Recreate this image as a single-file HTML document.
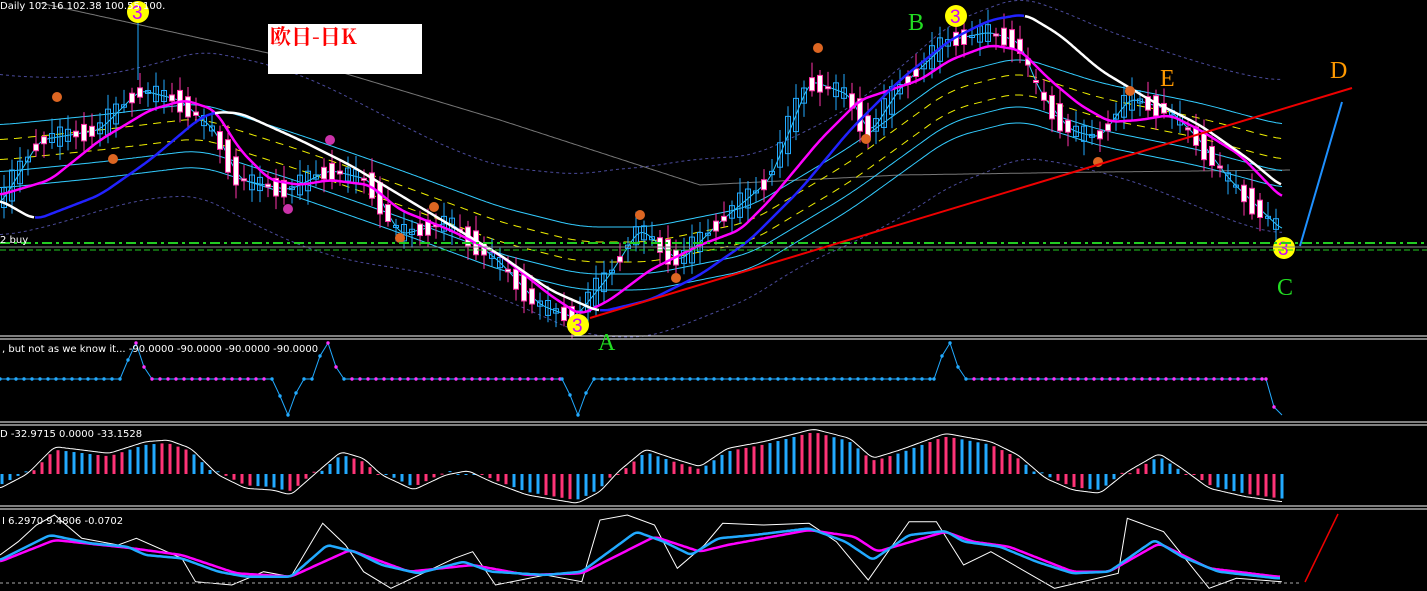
<!DOCTYPE html><html><head><meta charset="utf-8"><style>
body{margin:0;background:#000;width:1427px;height:591px;overflow:hidden;font-family:"Liberation Sans","Noto Sans CJK SC",sans-serif}
svg{position:absolute;left:0;top:0}
.t{fill:#fff;font-size:10px;font-family:"DejaVu Sans",sans-serif}
</style></head><body>
<svg id="s" width="1427" height="591" xmlns="http://www.w3.org/2000/svg">
<rect width="1427" height="591" fill="#000"/>
<g id="g"></g>
<line x1="0" y1="336" x2="1427" y2="336" stroke="#fff"/><line x1="0" y1="339" x2="1427" y2="339" stroke="#fff"/>
<line x1="0" y1="422" x2="1427" y2="422" stroke="#fff"/><line x1="0" y1="425" x2="1427" y2="425" stroke="#fff"/>
<line x1="0" y1="506" x2="1427" y2="506" stroke="#fff"/><line x1="0" y1="509" x2="1427" y2="509" stroke="#fff"/>
<line x1="0" y1="243" x2="1427" y2="243" stroke="#2c2" stroke-width="2" stroke-dasharray="10,4,3,4"/>
<line x1="0" y1="247" x2="1427" y2="247" stroke="#888"/>
<line x1="0" y1="250" x2="1427" y2="250" stroke="#2c2" stroke-dasharray="6,3"/>
<line x1="0" y1="583" x2="1300" y2="583" stroke="#aaa" stroke-dasharray="3,3"/>
<line x1="590" y1="318" x2="1352" y2="88" stroke="#e00" stroke-width="2"/>
<line x1="1300" y1="246" x2="1342" y2="102" stroke="#1e90ff" stroke-width="2"/>
<line x1="1305" y1="582" x2="1338" y2="514" stroke="#e00" stroke-width="1.5"/>
<rect x="268" y="24" width="154" height="50" fill="#fff"/>
<text x="270" y="44" fill="#f00" font-size="21" font-family="'Noto Serif CJK SC',serif" font-weight="bold">欧日-日K</text>
<text class="t" x="0" y="9">Daily  102.16 102.38 100.55 100.</text>
<text class="t" x="0" y="243">2 buy</text>
<text class="t" x="2" y="352">, but not as we know it...  -90.0000 -90.0000 -90.0000 -90.0000</text>
<text class="t" x="0" y="437">D -32.9715 0.0000 -33.1528</text>
<text class="t" x="2" y="524">I 6.2970 9.4806 -0.0702</text>
<g font-family="'Liberation Serif',serif" font-size="24">
<text x="598" y="350" fill="#2d2">A</text><text x="908" y="30" fill="#2d2">B</text>
<text x="1277" y="295" fill="#2d2">C</text><text x="1330" y="78" fill="#f90">D</text>
<text x="1160" y="86" fill="#f90">E</text></g>
</svg>
<script>
var g=document.getElementById('g'),N='http://www.w3.org/2000/svg';
function el(t,a,p){var e=document.createElementNS(N,t);for(var k in a)e.setAttribute(k,a[k]);(p||g).appendChild(e);return e}
function mk(K){return function(x){if(x<=K[0][0])return K[0][1];for(var i=0;i<K.length-1;i++)if(x<=K[i+1][0]){var t=(x-K[i][0])/(K[i+1][0]-K[i][0]);return K[i][1]+t*(K[i+1][1]-K[i][1])}return K[K.length-1][1]}}
function sm(f,w){return function(x){var s=0,n=0;for(var d=-w;d<=w;d+=2){s+=f(x+d);n++}return s/n}}
function line(f,c,w,x0,x1,da){var d='';for(var x=x0;x<=x1;x+=2)d+=(x==x0?'M':'L')+x+','+f(x).toFixed(1);el('path',{d:d,stroke:c,'stroke-width':w,fill:'none','stroke-dasharray':da||''})}
function poly(pts,c,w){var d='';pts.forEach(function(p,i){d+=(i?'L':'M')+p[0].toFixed(1)+','+p[1].toFixed(1)});el('path',{d:d,stroke:c,'stroke-width':w,fill:'none'})}
var P=sm(mk([[0,205],[40,140],[100,130],[140,90],[180,100],[215,130],[240,180],[290,190],[330,170],[370,180],[400,235],[450,222],[500,262],[540,305],[575,318],[610,275],[640,228],[680,262],[720,222],[770,180],[810,80],[850,95],[870,135],[900,88],[950,40],[990,32],[1020,42],[1040,92],[1070,130],[1100,138],[1130,98],[1170,110],[1200,140],[1230,180],[1282,230]]),4);
var C=sm(mk([[0,150],[100,140],[200,128],[300,160],[400,195],[500,232],[580,252],[650,252],[750,232],[850,172],[950,100],[1020,82],[1100,108],[1200,128],[1282,150]]),20);
var M=sm(mk([[0,195],[50,180],[100,140],[150,110],[185,100],[215,110],[240,150],[270,180],[300,185],[330,180],[370,185],[400,210],[450,230],[500,255],[550,295],[580,315],[610,300],[650,270],[700,245],[740,230],[770,200],[820,140],[860,100],[890,90],[920,80],[950,60],[990,45],[1020,50],[1050,80],[1080,105],[1110,122],[1140,120],[1170,115],[1200,130],[1240,155],[1282,198]]),8);
var S=sm(mk([[0,200],[35,220],[100,195],[150,160],[200,118],[215,112],[240,113],[300,140],[350,165],[400,195],[450,225],[500,255],[550,290],[600,312],[650,300],[700,275],[750,240],[800,190],[850,130],[900,80],[950,40],[990,20],[1025,14],[1060,35],[1100,70],[1150,100],[1200,125],[1250,160],[1282,187]]),10);
var Gr=mk([[40,3],[300,60],[500,120],[700,185],[900,175],[1100,172],[1290,170]]);
line(function(x){return C(x)-75+Math.sin(x/60)*10},'#4a4a9a',1,0,1282,'3,3');
line(function(x){return C(x)+75+Math.cos(x/50)*10},'#4a4a9a',1,0,1282,'3,3');
line(Gr,'#777',1,40,1290);
line(function(x){return C(x)-25},'#3cf',1,0,1282);
line(function(x){return C(x)+22},'#3cf',1,0,1282);
line(function(x){return C(x)-10},'#ee0',1,0,1282,'8,6');
line(function(x){return C(x)+10},'#ee0',1,0,1282,'8,6');
line(function(x){return C(x)+38},'#3cf',1,0,1282);
line(sm(P,6),'#3cf',1,0,1282);
for(var x=4;x<1282;x+=8){var a=P(x-4),b=P(x+4),j=Math.sin(x*1.7)*9,o=a+j,c=b-j;var up=c<o;var col=up?'#2af':'#f3a';var tp=Math.min(o,c),h=Math.max(2,Math.abs(o-c));
el('line',{x1:x,y1:tp-5-Math.abs(Math.sin(x))*10,x2:x,y2:tp+h+5+Math.abs(Math.cos(x))*9,stroke:col});
el('rect',{x:x-2.5,y:tp,width:5,height:h,fill:up?'none':'#fff',stroke:col})}
line(M,'#f0f',2.5,0,1282);
line(S,'#fff',2.5,0,35);line(S,'#22f',2.5,35,215);line(S,'#fff',2.5,215,600);line(S,'#22f',2.5,600,1025);line(S,'#fff',2.5,1025,1282);
[[57,97],[113,159],[288,209],[330,140],[400,238],[434,207],[640,215],[676,278],[818,48],[866,139],[1098,162],[1130,91]].forEach(function(p){el('circle',{cx:p[0],cy:p[1],r:5,fill:p[0]==288||p[0]==330?'#c3a':'#d62'})});
el('line',{x1:138,y1:22,x2:138,y2:80,stroke:'#2af'});
[[138,12],[956,16],[578,325],[1284,248]].forEach(function(p){el('circle',{cx:p[0],cy:p[1],r:11,fill:'#ff0'});var t=el('text',{x:p[0]-6,y:p[1]+7,fill:'#c0f','font-size':19,'font-family':'Liberation Sans'});t.textContent='3'});
var L2=[[0,379],[120,379],[128,360],[136,343],[144,367],[152,379],[272,379],[280,396],[288,415],[296,393],[304,379],[312,379],[320,356],[328,343],[336,367],[344,379],[562,379],[570,395],[578,415],[586,393],[594,379],[934,379],[942,356],[950,343],[958,367],[966,379],[1266,379],[1274,407],[1282,415]];
poly(L2,'#2af',1);
for(var i=0;i<L2.length-1;i++){var a2=L2[i],b2=L2[i+1];for(var x=a2[0];x<b2[0];x+=8){var y=a2[1]+(x-a2[0])/(b2[0]-a2[0])*(b2[1]-a2[1]);var mag=(x>150&&x<272)||(x>344&&x<562)||(x>966)||(x>=136&&x<152)||(x>=328&&x<344);el('circle',{cx:x,cy:y,r:1.7,fill:mag?'#f3f':'#2af'})}}
function cv(arr,ox,oy){return arr.map(function(p){return [p[0]/1.1,oy+p[1]/3]})}
var E=cv([[0,190],[30,147],[60,65],[90,75],[120,85],[160,50],[185,45],[210,70],[240,150],[270,190],[300,195],[320,210],[345,150],[375,80],[400,100],[420,150],[455,195],[490,150],[515,137],[540,170],[580,210],[635,235],[660,200],[680,140],[710,72],[740,100],[770,125],[800,70],[840,50],[895,12],[935,40],[960,100],[990,75],[1040,25],[1090,50],[1120,90],[1150,160],[1180,195],[1210,205],[1240,140],[1275,85],[1300,130],[1330,190],[1370,215],[1410,230]],0,425);
var EF=sm(mk(E),4);
for(var x=2;x<=1282;x+=8){var y=EF(x);var col=(Math.floor(x/32)%2==0)?'#2af':'#f37';el('rect',{x:x-1.5,y:Math.min(474,y+(y<474?3:-3)),width:3,height:Math.max(1,Math.abs(y-474)-3),fill:col})}
line(EF,'#fff',1,0,1282);
var B=cv([[0,405],[55,330],[100,355],[140,365],[160,390],[200,400],[240,440],[270,455],[320,455],[360,360],[390,380],[420,420],[460,445],[510,410],[540,440],[600,450],[640,440],[700,320],[730,350],[760,390],[790,340],[830,330],[890,310],[930,350],[960,405],[1000,330],[1040,318],[1060,350],[1100,365],[1140,410],[1180,445],[1220,440],[1270,345],[1300,395],[1340,440],[1405,460]],0,425);
var Mg=cv([[0,410],[60,345],[140,368],[200,390],[260,445],[320,455],[385,375],[450,440],[520,420],[580,450],[640,445],[720,335],[770,380],[800,360],[890,315],[940,335],[965,380],[1040,320],[1070,350],[1110,365],[1180,440],[1220,440],[1275,355],[1330,430],[1405,455]],0,425);
var W=cv([[0,390],[20,350],[40,300],[60,270],[90,340],[130,360],[150,340],[200,400],[215,470],[255,480],[290,440],[320,455],[355,295],[380,360],[400,440],[430,490],[500,400],[520,380],[545,480],[600,450],[640,470],[660,285],[690,270],[720,300],[745,430],[775,360],[795,295],[840,300],[890,295],[920,350],[955,465],[1000,290],[1030,290],[1060,420],[1090,380],[1160,490],[1230,445],[1240,280],[1280,320],[1330,490],[1360,460],[1410,470]],0,425);
poly(W,'#fff',1);line(sm(mk(Mg),4),'#f0f',2.5,0,1280);line(sm(mk(B),3),'#2af',2.5,0,1280);
</script>
</body></html>
